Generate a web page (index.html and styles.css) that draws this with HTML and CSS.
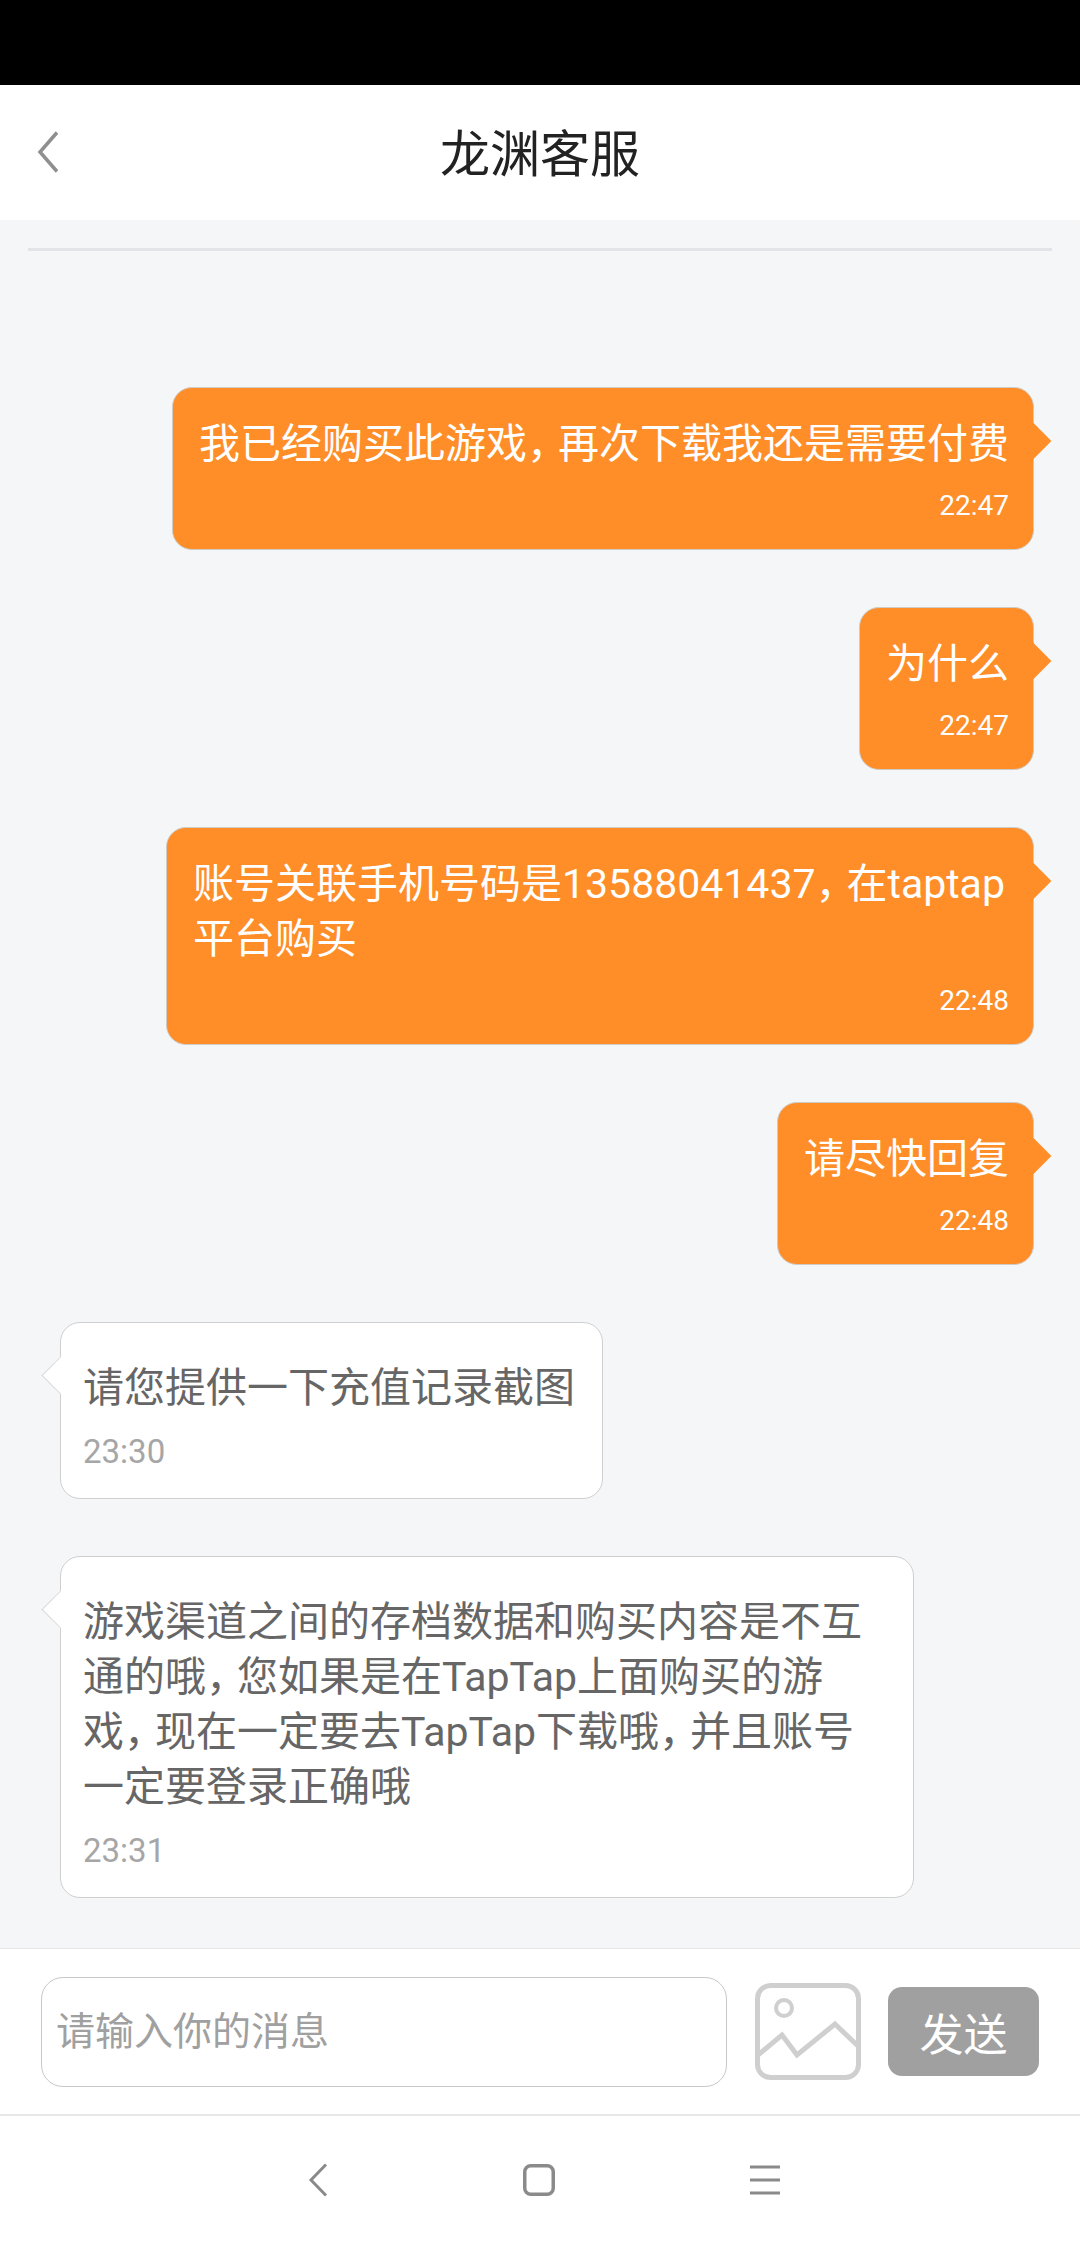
FILE: index.html
```html
<!DOCTYPE html>
<html lang="zh-CN">
    <head>
        <meta charset="utf-8">
        <title>龙渊客服</title>
        <link rel="stylesheet" href="styles.css">
    </head>
    <body>
        <div class="statusBar"></div>

        <div class="header">
            <svg class="backIcon" width="22" height="42" viewBox="0 0 22 42">
                <path d="M20 1.5 L3 21 L20 40.5" fill="none" stroke="#8f8f8f" stroke-width="3.5"/>
            </svg>
            <h1 class="title">龙渊客服</h1>
        </div>

        <div class="chat">
            <div class="divider"></div>

            <div class="msg msgRight">
                <p class="msgText">我已经购买此游戏<span class="comma">，</span>再次下载我还是需要付费</p>
                <p class="msgTime">22:47</p>
            </div>
            <div class="msg msgRight">
                <p class="msgText">为什么</p>
                <p class="msgTime">22:47</p>
            </div>
            <div class="msg msgRight msgFull">
                <p class="msgText">账号关联手机号码是13588041437<span class="comma">，</span>在taptap<br>平台购买</p>
                <p class="msgTime">22:48</p>
            </div>
            <div class="msg msgRight">
                <p class="msgText">请尽快回复</p>
                <p class="msgTime">22:48</p>
            </div>
            <div class="msg msgLeft">
                <p class="msgText">请您提供一下充值记录截图</p>
                <p class="msgTime">23:30</p>
            </div>
            <div class="msg msgLeft msgFull">
                <p class="msgText">游戏渠道之间的存档数据和购买内容是不互<br>通的哦<span class="comma">，</span>您如果是在TapTap上面购买的游<br>戏<span class="comma">，</span>现在一定要去TapTap下载哦<span class="comma">，</span>并且账号<br>一定要登录正确哦</p>
                <p class="msgTime">23:31</p>
            </div>
        </div>

        <div class="inputBar">
            <input class="msgInput" type="text" placeholder="请输入你的消息">
            <svg class="imageIcon" width="106" height="97" viewBox="0 0 106 97">
                <rect x="2.5" y="2.5" width="101" height="92" rx="13" fill="none" stroke="#cfcfcf" stroke-width="5"/>
                <ellipse cx="29" cy="25" rx="8" ry="8" fill="none" stroke="#cfcfcf" stroke-width="4"/>
                <path d="M3 72 L27 52 L42 72 L80 41 L104 64" fill="none" stroke="#cfcfcf" stroke-width="5"/>
            </svg>
            <button class="sendBtn">发送</button>
        </div>

        <div class="navBar">
            <svg width="20" height="34" viewBox="0 0 20 34">
                <path d="M18 1.5 L3 17 L18 32.5" fill="none" stroke="#8a8a8a" stroke-width="3"/>
            </svg>
            <svg width="32" height="32" viewBox="0 0 32 32">
                <rect x="1.75" y="1.75" width="28.5" height="28.5" rx="6" fill="none" stroke="#8a8a8a" stroke-width="3.5"/>
            </svg>
            <svg width="32" height="30" viewBox="0 0 32 30">
                <path d="M0 2 H30 M0 15 H30 M0 28 H30" fill="none" stroke="#8a8a8a" stroke-width="3"/>
            </svg>
        </div>
    </body>
</html>
```

FILE: styles.css
```css
* {
    box-sizing: border-box;
}
body {
    margin: 0;
    width: 1080px;
    height: 2244px;
    display: flex;
    flex-direction: column;
    background-color: #f5f6f8;
    font-family: Roboto, "Noto Sans CJK SC", sans-serif;
    overflow: hidden;
}
.statusBar {
    height: 85px;
    flex: none;
    background-color: #000;
}
.header {
    height: 135px;
    flex: none;
    background-color: #fff;
    display: flex;
    align-items: center;
    justify-content: center;
    padding-bottom: 6px;
    position: relative;
}
.backIcon {
    position: absolute;
    left: 37px;
    top: 46px;
}
.title {
    margin: 0;
    font-size: 50px;
    font-weight: 400;
    color: #222;
}
.chat {
    flex: 1;
    min-height: 0;
    padding: 28px 28px 0;
    display: flex;
    flex-direction: column;
}
.divider {
    height: 3px;
    background-color: #e3e4e8;
    margin-bottom: 136px;
    flex: none;
}
.msg {
    position: relative;
    border-radius: 20px;
    margin-bottom: 57px;
    flex: none;
}
.msg:last-child {
    margin-bottom: 0;
}
.msgFull {
    width: 100%;
}
.msg p {
    margin: 0;
}
.msgText {
    font-size: 41px;
    line-height: 55px;
}
/* the phone font has a narrow comma */
.comma {
    letter-spacing: -10px;
}
.msg::after {
    content: "";
    position: absolute;
    width: 26px;
    height: 26px;
    transform: rotate(45deg);
}
.msgRight {
    align-self: flex-end;
    margin-right: 18px;
    max-width: 868px;
    background-color: #ff8d28;
    border: 1px solid #cfccc8;
    color: #fff;
    padding: 29px 24px 25px 26px;
}
.msgRight::after {
    top: 40px;
    right: -13px;
    background-color: #ff8d28;
}
.msgRight .msgTime {
    font-size: 28px;
    line-height: 36px;
    text-align: right;
    margin-top: 16px;
}
.msgLeft {
    align-self: flex-start;
    margin-left: 32px;
    max-width: 854px;
    background-color: #fff;
    border: 1px solid #cfcfcf;
    color: #666;
    padding: 38px 27px 26px 22px;
}
.msgLeft::after {
    top: 39px;
    left: -14px;
    background-color: #fff;
    border-left: 1px solid #d8d8d8;
    border-bottom: 1px solid #d8d8d8;
}
.msgLeft .msgTime {
    font-size: 33px;
    line-height: 40px;
    color: #a6a6a6;
    margin-top: 16px;
}
.inputBar {
    height: 168px;
    flex: none;
    background-color: #fff;
    border-top: 1px solid #e8e8e8;
    border-bottom: 2px solid #e8e8e8;
    padding: 0 41px;
    display: flex;
    align-items: center;
}
.msgInput {
    width: 686px;
    height: 110px;
    border: 1px solid #c8c8c8;
    border-radius: 22px;
    padding: 0 14px;
    font-family: inherit;
    font-size: 39px;
    color: #666;
    margin-right: 28px;
}
.msgInput::placeholder {
    color: #a0a0a0;
}
.imageIcon {
    flex: none;
    margin-right: 27px;
}
.sendBtn {
    width: 151px;
    height: 89px;
    flex: none;
    border: none;
    border-radius: 14px;
    background-color: #a0a0a0;
    color: #fff;
    font-family: inherit;
    font-size: 44px;
}
.navBar {
    height: 128px;
    flex: none;
    background-color: #fff;
    display: flex;
    align-items: center;
    padding-left: 308px;
    gap: 195px;
}
```
